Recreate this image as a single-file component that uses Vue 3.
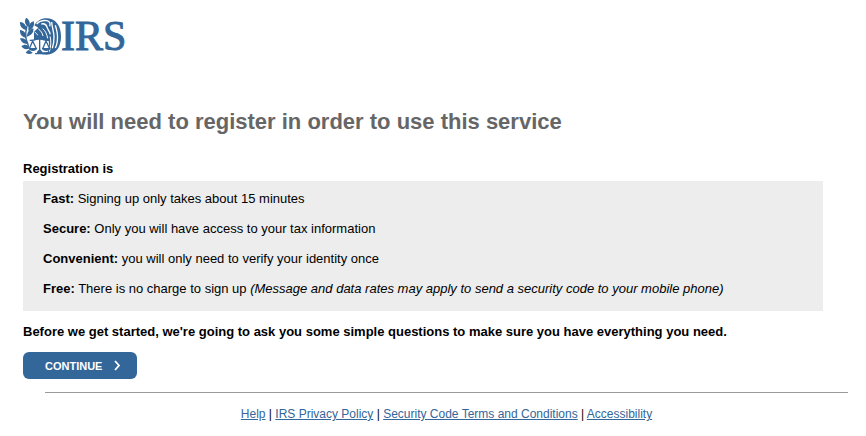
<template>
  <div class="page">
    <header class="brand">
      <svg class="emblem" viewBox="18 21 123 111" aria-hidden="true">
        <g fill="#336699">
          <path d="M37 20c11 9 13 19 7 28-11-7-15-17-7-28z" />
          <path d="M18 33c14 2 20 12 19 24-13-2-20-11-19-24z" />
          <path d="M59 31c4 14-3 23-16 28-1-14 4-24 16-28z" />
          <path d="M18 57c12 1 19 10 18 24-13-4-19-12-18-24z" />
          <path d="M58 52c2 13-6 21-19 25 0-14 7-22 19-25z" />
          <path d="M18 82c12-2 21 4 25 17-13 1-21-4-25-17z" />
          <path d="M22 106c10-7 18-6 26 4-9 7-18 6-26-4z" />
          <path d="M35 125c8-10 17-12 26-5-7 10-16 11-26 5z" />
          <path d="M61 43c8-13 20-21 36-21 27 0 44 21 44 54 0 35-17 55-43 55-18 0-30-5-38-14V62l13-12z" />
        </g>
        <path d="M39 44c-8 30-3 55 14 73" fill="none" stroke="#336699" stroke-width="4" />
        <g fill="none" stroke="#fff" stroke-width="4">
          <path d="M68 39c8-9 18-12 31-10 9 2 11 9 8 17M82 39c9-2 15 2 17 9 2 8 8 13 10 22" />
          <path d="M113 33c1 17 7 28 7 45 0 14-1 22-5 34M124 43c5 15 8 31 6 47-1 9-3 15-6 21" />
          <path d="M62 63c5 3 8 7 10 11M73 54c8 5 12 12 14 21M86 53c8 6 13 17 15 29" stroke-width="3" />
          <path d="M108 76c4 14 3 31-2 46" stroke-width="3" />
        </g>
        <path d="M47 91c11 0 20-5 29-6 9 1 17 6 28 5l2 19-5 14-45 2-12-9z" fill="#fff" />
        <g fill="none" stroke="#336699" stroke-width="4" stroke-linejoin="round">
          <path d="M77 72v52M47 88c12 1 21-4 30-5 9 1 18 5 29 4M56 90l-10 23h21zM96 90l-10 23h21zM63 128h28" />
        </g>
        <g fill="#336699">
          <path d="M43 111h27c-3 12-24 12-27 0zM83 111h27c-3 12-24 12-27 0z" />
          <path d="M70 74l7-8 7 8-3 11h-8zM69 122l8-8 8 8v7H69z" />
        </g>
      </svg>
      <span class="brand-name">IRS</span>
    </header>

    <main class="content">
      <h1>You will need to register in order to use this service</h1>
      <h2>Registration is</h2>
      <div class="benefits">
        <p v-for="item in benefits" :key="item.label">
          <strong>{{ item.label }}:</strong> {{ item.text }}
          <em v-if="item.note">({{ item.note }})</em>
        </p>
      </div>
      <p class="intro">
        Before we get started, we're going to ask you some simple questions to make sure you have everything you need.
      </p>
      <button type="button" class="continue">
        CONTINUE
        <svg class="chevron" viewBox="0 0 7 11" aria-hidden="true">
          <path d="M1 1l4 4.500-4 4.500" fill="none" stroke="#fff" stroke-width="1.800" />
        </svg>
      </button>
    </main>

    <footer class="footer">
      <template v-for="(link, i) in links" :key="link">
        <span v-if="i > 0"> | </span>
        <a href="#">{{ link }}</a>
      </template>
    </footer>
  </div>
</template>

<script setup>
const benefits = [
  { label: 'Fast', text: 'Signing up only takes about 15 minutes' },
  { label: 'Secure', text: 'Only you will have access to your tax information' },
  { label: 'Convenient', text: 'you will only need to verify your identity once' },
  {
    label: 'Free',
    text: 'There is no charge to sign up',
    note: 'Message and data rates may apply to send a security code to your mobile phone',
  },
]

const links = ['Help', 'IRS Privacy Policy', 'Security Code Terms and Conditions', 'Accessibility']
</script>

<style>
body {
  margin: 0;
  background: #fff;
}
</style>

<style scoped>
.page {
  font-family: Arial, 'Liberation Sans', sans-serif;
  font-size: 13px;
  line-height: 16px;
  color: #000;
}

.brand {
  display: flex;
  align-items: center;
  padding: 17px 20px 0;
  height: 38px;
}

.emblem {
  width: 41px;
  height: 37px;
}

.brand-name {
  font-family: 'Times New Roman', 'Liberation Serif', serif;
  font-size: 42px;
  line-height: 38px;
  color: #336699;
  -webkit-text-stroke: 1px #336699;
}

.content {
  margin: 53px 43px 0 23px;
}

h1 {
  margin: 0 0 25px;
  font-size: 22px;
  line-height: 28px;
  color: #666;
}

h2 {
  margin: 0 0 4px;
  font-size: 13px;
  line-height: 16px;
}

.benefits {
  padding: 10px 20px 14px;
  background: #ededed;
}

.benefits p {
  margin: 0 0 14px;
}

.benefits p:last-child {
  margin-bottom: 0;
}

.intro {
  margin: 13px 0 12px;
  font-weight: bold;
}

.continue {
  display: flex;
  align-items: center;
  gap: 12px;
  height: 27px;
  padding: 0 16px 0 22px;
  border: 0;
  border-radius: 6px;
  background: #336699;
  color: #fff;
  font-family: inherit;
  font-size: 11px;
  font-weight: bold;
  cursor: pointer;
}

.chevron {
  width: 7px;
  height: 11px;
}

.footer {
  margin: 13px 18px 0 45px;
  padding-top: 13px;
  border-top: 1px solid #999;
  font-size: 12px;
  text-align: center;
}

.footer a {
  color: #336699;
}
</style>
